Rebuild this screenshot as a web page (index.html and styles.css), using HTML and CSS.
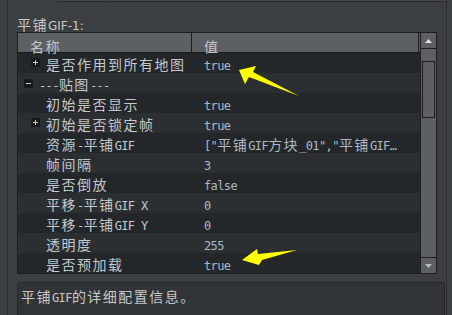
FILE: index.html
```html
<!DOCTYPE html>
<html lang="zh">
<head>
    <meta charset="UTF-8">
    <title>平铺GIF属性</title>
    <link rel="stylesheet" href="styles.css">
</head>
<body>
    <div class="panel">
        <div class="topbox"><div class="topbox-cell"></div></div>

        <div class="title"><span class="cj">平铺</span>GIF-1:</div>

        <div class="table">
            <div class="grid">
                <div class="head">
                    <div class="hname"><span class="cj">名称</span></div>
                    <div class="hval"><span class="cj">值</span></div>
                </div>
                <div class="rows">
                    <div class="row">
                        <div class="name has-tog"><svg class="tog" width="9" height="9" viewBox="0 0 9 9"><rect width="9" height="9" rx="1.5" fill="#17181a"/><path d="M2 4.5h5M4.5 2v5" stroke="#c8c8c8"/></svg><span class="cj">是否作用到所有地图</span></div>
                        <div class="val">true</div>
                    </div>
                    <div class="row">
                        <div class="name grp"><svg class="tog" width="9" height="9" viewBox="0 0 9 9"><rect width="9" height="9" rx="1.5" fill="#17181a"/><path d="M2 4.5h5" stroke="#c8c8c8"/></svg>---<span class="cj">贴图</span>---</div>
                        <div class="val"></div>
                    </div>
                    <div class="row">
                        <div class="name"><span class="cj">初始是否显示</span></div>
                        <div class="val">true</div>
                    </div>
                    <div class="row">
                        <div class="name has-tog"><svg class="tog" width="9" height="9" viewBox="0 0 9 9"><rect width="9" height="9" rx="1.5" fill="#17181a"/><path d="M2 4.5h5M4.5 2v5" stroke="#c8c8c8"/></svg><span class="cj">初始是否锁定帧</span></div>
                        <div class="val">true</div>
                    </div>
                    <div class="row">
                        <div class="name"><span class="cj">资源</span>-<span class="cj">平铺</span>GIF</div>
                        <div class="val">["<span class="cj">平铺</span>GIF<span class="cj">方块</span>_01","<span class="cj">平铺</span>GIF…</div>
                    </div>
                    <div class="row">
                        <div class="name"><span class="cj">帧间隔</span></div>
                        <div class="val">3</div>
                    </div>
                    <div class="row">
                        <div class="name"><span class="cj">是否倒放</span></div>
                        <div class="val">false</div>
                    </div>
                    <div class="row">
                        <div class="name"><span class="cj">平移</span>-<span class="cj">平铺</span>GIF X</div>
                        <div class="val">0</div>
                    </div>
                    <div class="row">
                        <div class="name"><span class="cj">平移</span>-<span class="cj">平铺</span>GIF Y</div>
                        <div class="val">0</div>
                    </div>
                    <div class="row">
                        <div class="name"><span class="cj">透明度</span></div>
                        <div class="val">255</div>
                    </div>
                    <div class="row">
                        <div class="name"><span class="cj">是否预加载</span></div>
                        <div class="val">true</div>
                    </div>
                </div>
            </div>
            <div class="scroll">
                <div class="sbtn up"><svg width="7" height="4" viewBox="0 0 7 4"><path d="M3.5 0L7 4H0z" fill="#e2e4e6"/></svg></div>
                <div class="track"><div class="thumb"></div></div>
                <div class="sbtn down"><svg width="7" height="4" viewBox="0 0 7 4"><path d="M0 0h7L3.5 4z" fill="#b9bdc1"/></svg></div>
            </div>
        </div>

        <div class="desc"><span class="cj">平铺</span>GIF<span class="cj">的详细配置信息。</span></div>
    </div>

    <!-- yellow annotation arrows drawn over the screenshot -->
    <svg class="marks" width="452" height="315" viewBox="0 0 452 315">
        <polygon points="239,70 256,66 253,72 299,96 249,77 245,84" fill="#ffff00"/>
        <polygon points="242,260 257,249 258,254 297,250 262,260 259,265" fill="#ffff00"/>
    </svg>
</body>
</html>
```

FILE: styles.css
```css
/* Reset */
* {
    margin: 0;
    padding: 0;
    box-sizing: border-box;
}

body {
    width: 452px;
    height: 315px;
    overflow: hidden;
    position: relative;
    background: #3e4143;
}

/* Outer dock panel */
.panel {
    margin-left: 7px;
    width: 440px;
    height: 315px;
    background: #3c3f41;
    border-left: 1px solid #2c2e30;
    border-right: 1px solid #2c2e30;
}

/* Bottom edge of the widget above */
.topbox {
    margin-left: 49px;
    width: 389px;
    height: 2px;
    background: #45484b;
    border-left: 1px solid #292b2d;
    border-bottom: 1px solid #292b2d;
}

.topbox-cell {
    width: 48px;
    height: 1px;
    border-right: 1px solid #292b2d;
}

.cj {
    font-family: "Noto Sans CJK SC", sans-serif;
    font-size: 14px;
    letter-spacing: 1.5px;
    line-height: 0;
}

.title {
    height: 30px;
    padding: 16px 0 0 9px;
    font: 12px/16px "DejaVu Sans", sans-serif;
    color: #c8c8c8;
}

/* Property table */
.table {
    display: flex;
    margin-left: 9px;
    width: 420px;
    border: 1px solid #1d1e1f;
}

.grid {
    width: 402px;
}

.head {
    display: flex;
    height: 20px;
    background: #5c6064;
    border-bottom: 1px solid #1d1e1f;
    font: 12px/20px "DejaVu Sans", sans-serif;
    color: #c3c7cb;
}

.hname {
    width: 174px;
    padding: 5px 0 0 12px;
    border-right: 1px solid #1d1e1f;
}

.hval {
    width: 227px;
    padding: 5px 0 0 12px;
    border-right: 1px solid #1d1e1f;
}

.row {
    display: flex;
    height: 20px;
    background: #24272a;
    font: 12px/20px "DejaVu Sans Mono", monospace;
    letter-spacing: -0.6px;
    white-space: nowrap;
}

.row:nth-child(even) {
    background: #2c2f32;
}

.name {
    width: 174px;
    padding: 3px 0 0 28px;
    color: #c3c8cd;
}

.name.has-tog {
    padding-left: 13px;
}

.name.grp {
    padding-left: 6px;
}

.tog {
    display: inline-block;
    vertical-align: top;
    margin: 2px 6px 0 0;
}

.grp .tog {
    margin-top: 3px;
}

.val {
    flex: 1;
    padding: 3px 0 0 12px;
    color: #acb8c4;
}

/* Vertical scrollbar */
.scroll {
    width: 16px;
    display: flex;
    flex-direction: column;
    background: #5c6064;
    border-left: 1px solid #1d1e1f;
}

.sbtn {
    height: 16px;
    display: flex;
    align-items: center;
    justify-content: center;
}

.sbtn svg {
    display: block;
}

.sbtn.up {
    border-bottom: 1px solid #1d1e1f;
}

.sbtn.down {
    border-top: 1px solid #1d1e1f;
}

.track {
    flex: 1;
    padding: 12px 1px 0;
}

.thumb {
    height: 57px;
    border: 1px solid #1d1e1f;
}

/* Description box */
.desc {
    margin: 8px 0 0 9px;
    width: 428px;
    height: 40px;
    padding: 5px 0 0 3px;
    background: #313437;
    border: 1px solid #26282a;
    border-radius: 3px;
    font: 12px/20px "DejaVu Sans Mono", monospace;
    letter-spacing: -0.6px;
    color: #c8c8c8;
    white-space: nowrap;
}

.marks {
    position: absolute;
    left: 0;
    top: 0;
    pointer-events: none;
}
```
